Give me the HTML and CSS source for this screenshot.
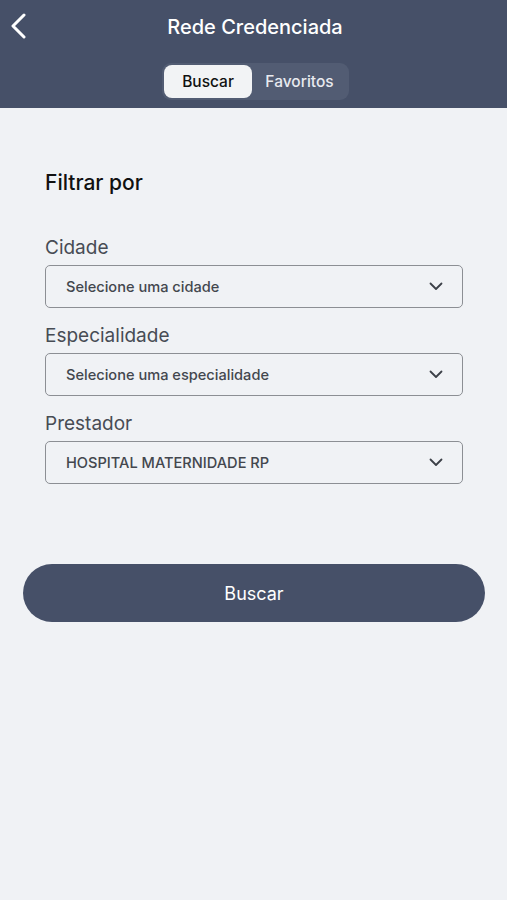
FILE: index.html
```html
<!DOCTYPE html>
<html lang="pt-BR">
<head>
    <meta charset="UTF-8">
    <meta name="viewport" content="width=device-width, initial-scale=1.0">
    <title>Rede Credenciada</title>
    <link rel="stylesheet" href="styles.css">
</head>
<body>

    <div class="header">
        <div class="topbar">
            <a href="#" class="back">
                <svg width="18" height="26" viewBox="0 0 18 26">
                    <path d="M14 2 L3 13 L14 24" fill="none" stroke="white" stroke-width="3" stroke-linecap="round" stroke-linejoin="round"/>
                </svg>
            </a>
            <div class="title">Rede Credenciada</div>
        </div>
        <div class="tabs">
            <div class="tab active">Buscar</div>
            <div class="tab">Favoritos</div>
        </div>
    </div>

    <div class="content">
        <div class="section-title">Filtrar por</div>

        <div class="field">
            <div class="label">Cidade</div>
            <div class="select">
                <span>Selecione uma cidade</span>
                <svg width="14" height="9" viewBox="0 0 14 9"><path d="M1.5 1.5 L7 7 L12.5 1.5" fill="none" stroke="#3c4048" stroke-width="1.8" stroke-linecap="round" stroke-linejoin="round"/></svg>
            </div>
        </div>

        <div class="field">
            <div class="label">Especialidade</div>
            <div class="select">
                <span>Selecione uma especialidade</span>
                <svg width="14" height="9" viewBox="0 0 14 9"><path d="M1.5 1.5 L7 7 L12.5 1.5" fill="none" stroke="#3c4048" stroke-width="1.8" stroke-linecap="round" stroke-linejoin="round"/></svg>
            </div>
        </div>

        <div class="field">
            <div class="label">Prestador</div>
            <div class="select">
                <span>HOSPITAL MATERNIDADE RP</span>
                <svg width="14" height="9" viewBox="0 0 14 9"><path d="M1.5 1.5 L7 7 L12.5 1.5" fill="none" stroke="#3c4048" stroke-width="1.8" stroke-linecap="round" stroke-linejoin="round"/></svg>
            </div>
        </div>
    </div>

    <div class="actions">
        <button class="botao">Buscar</button>
    </div>

</body>
</html>
```

FILE: styles.css
```css
body {
    margin: 0;
    font-family: Inter, "Noto Sans", sans-serif;
    background-color: #f0f2f5;
    color: #111;
    height: 900px;
}

.header {
    background-color: #465068;
    height: 108px;
    box-sizing: border-box;
    padding-top: 10px;
}

.topbar {
    position: relative;
    height: 34px;
    display: flex;
    justify-content: center;
    align-items: center;
}

.back {
    position: absolute;
    left: 10px;
    top: 3px;
}

.title {
    color: white;
    font-size: 20px;
    font-weight: 500;
    margin-left: 3px;
}

.tabs {
    margin: 19px auto 0;
    width: 187px;
    height: 37px;
    box-sizing: border-box;
    padding: 2px;
    display: flex;
    background-color: #525c73;
    border-radius: 9px;
    position: relative;
    left: 2px;
}

.tab {
    flex: 1;
    display: flex;
    justify-content: center;
    align-items: center;
    color: #e8eaef;
    font-size: 15.5px;
    font-weight: 500;
}

.tab.active {
    flex: 0 0 88px;
    background-color: #f2f3f5;
    color: #111;
    border-radius: 8px;
}

.content {
    padding: 62px 44px 0 45px;
}

.section-title {
    font-size: 21px;
    font-weight: 500;
    margin-bottom: 41px;
}

.field {
    margin-bottom: 16px;
}

.label {
    font-size: 19px;
    color: #474c54;
    margin-bottom: 6px;
}

.select {
    height: 43px;
    box-sizing: border-box;
    border: 1.5px solid #8c8f94;
    border-radius: 5px;
    display: flex;
    align-items: center;
    justify-content: space-between;
    padding: 0 19px 0 20px;
    font-size: 14.6px;
    font-weight: 500;
    color: #43474e;
}

.actions {
    padding: 64px 22px 0 23px;
}

.botao {
    width: 100%;
    height: 58px;
    border: none;
    border-radius: 29px;
    background-color: #465068;
    color: white;
    font-family: Inter, "Noto Sans", sans-serif;
    font-size: 18px;
}
```
